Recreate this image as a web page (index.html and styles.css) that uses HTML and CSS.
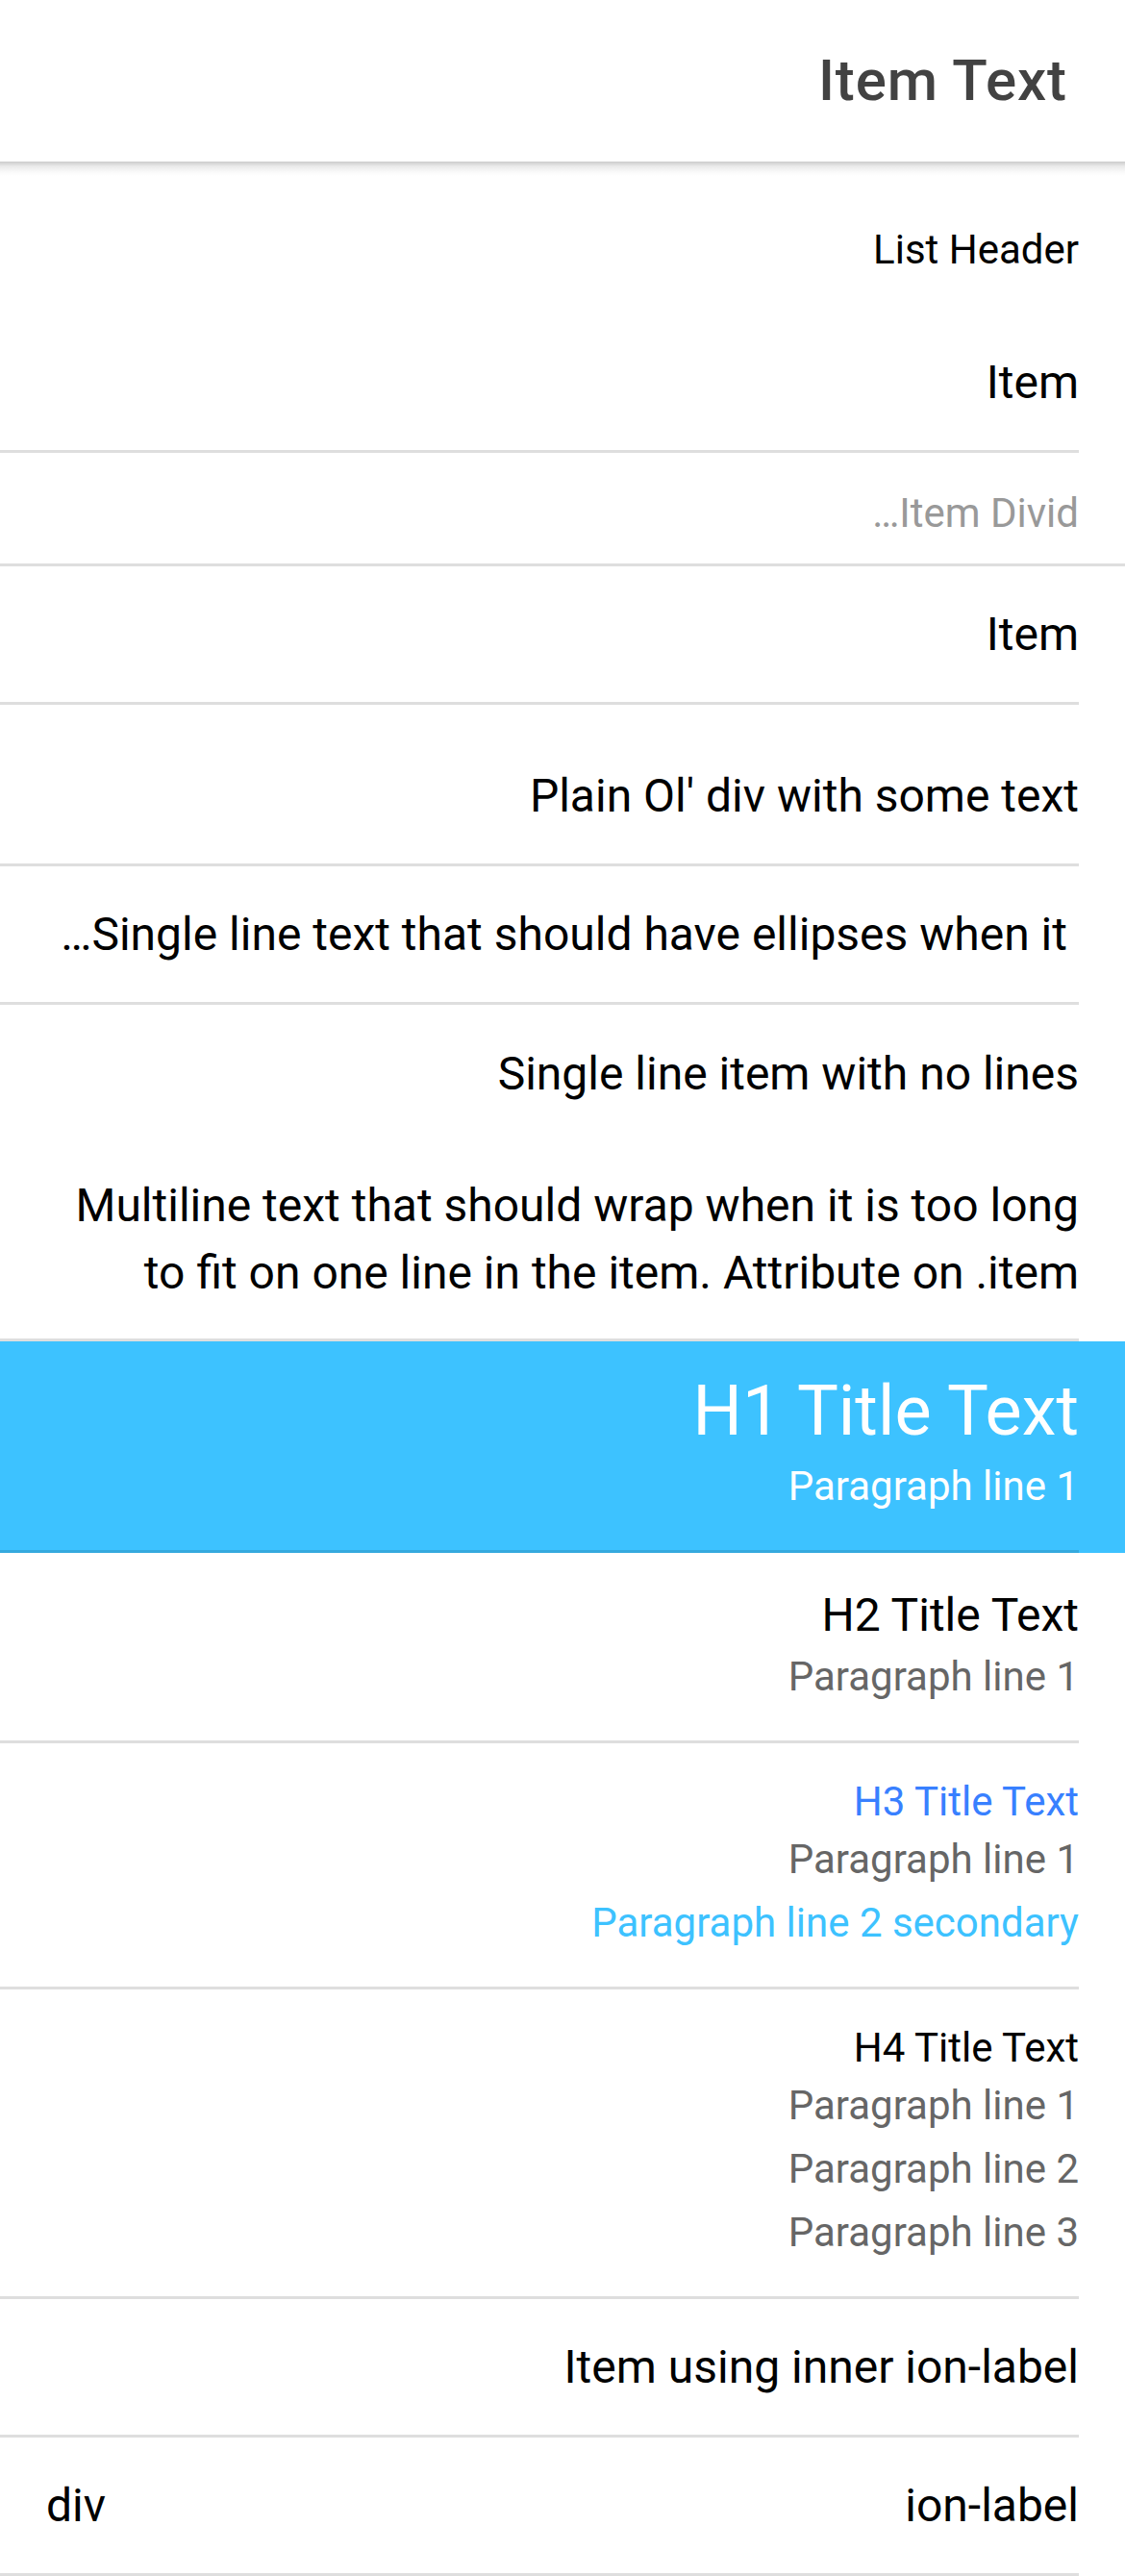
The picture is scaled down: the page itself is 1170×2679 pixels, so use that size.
FILE: index.html
```html
<!DOCTYPE html>
<html lang="en" dir="rtl">
<head>
<meta charset="utf-8">
<title>Item Text</title>
<link rel="stylesheet" href="styles.css">
</head>
<body>
<header class="toolbar">
  <div class="title">Item Text</div>
</header>
<main class="list">
  <div class="list-header">List Header</div>

  <div class="item"><div class="inner"><div class="label">Item</div></div></div>

  <div class="divider"><div class="divider-label"><span class="trunc" dir="ltr">…Item Divid</span></div></div>

  <div class="item"><div class="inner"><div class="label">Item</div></div></div>

  <div class="item item-plain"><div class="inner"><div class="plain">Plain Ol' div with some text</div></div></div>

  <div class="item"><div class="inner"><div class="label"><span class="trunc trunc-gap" dir="ltr">…Single line text that should have ellipses when it</span></div></div></div>

  <div class="item no-lines"><div class="inner"><div class="label">Single line item with no lines</div></div></div>

  <div class="item"><div class="inner"><div class="label wrap">Multiline text that should wrap when it is too long to fit on one line in the item. Attribute on .item</div></div></div>

  <div class="item item-secondary"><div class="inner"><div class="label stack">
    <h1>H1 Title Text</h1>
    <p>Paragraph line 1</p>
  </div></div></div>

  <div class="item"><div class="inner"><div class="label stack">
    <h2>H2 Title Text</h2>
    <p>Paragraph line 1</p>
  </div></div></div>

  <div class="item"><div class="inner"><div class="label stack">
    <h3 class="primary">H3 Title Text</h3>
    <p>Paragraph line 1</p>
    <p class="secondary">Paragraph line 2 secondary</p>
  </div></div></div>

  <div class="item"><div class="inner"><div class="label stack">
    <h4>H4 Title Text</h4>
    <p>Paragraph line 1</p>
    <p>Paragraph line 2</p>
    <p>Paragraph line 3</p>
  </div></div></div>

  <div class="item"><div class="inner"><div class="label">Item using inner ion-label</div></div></div>

  <div class="item"><div class="inner"><div class="label">ion-label</div><div class="end-div">div</div></div></div>
</main>
</body>
</html>
```

FILE: styles.css
```css
* {
  box-sizing: border-box;
}

html,
body {
  margin: 0;
  padding: 0;
  background: #fff;
}

body {
  font-family: Roboto, "Noto Sans", sans-serif;
  font-size: 48px;
  color: #000;
}

/* Toolbar */
.toolbar {
  position: relative;
  z-index: 2;
  display: flex;
  align-items: center;
  height: 168px;
  padding: 12px;
  background: #fff;
}

.toolbar::after {
  content: "";
  position: absolute;
  left: 0;
  right: 0;
  top: 100%;
  height: 15px;
  background: linear-gradient(to bottom, rgba(0, 0, 0, 0.2) 0%, rgba(0, 0, 0, 0.08) 35%, rgba(0, 0, 0, 0.02) 75%, rgba(0, 0, 0, 0) 100%);
}

.title {
  padding: 0 48px;
  font-size: 60px;
  font-weight: 500;
  line-height: 1;
  letter-spacing: 0.9px;
  color: #424242;
}

/* List */
.list {
  padding: 24px 0 24px;
}

.list-header {
  display: flex;
  align-items: center;
  min-height: 135px;
  padding-right: 48px;
  font-size: 42px;
  color: #000;
}

.item {
  padding-right: 48px;
  background: #fff;
}

.inner {
  display: flex;
  align-items: center;
  min-height: 144px;
  padding-left: 48px;
  border-bottom: 3px solid #dedede;
}

.no-lines .inner {
  border-bottom: none;
}

.label {
  flex: 1;
  min-width: 0;
  margin: 30px 0 30px 24px;
  line-height: 70px;
}

.trunc {
  display: inline-block;
  white-space: nowrap;
}

.trunc-gap {
  padding-right: 12px;
}

.wrap {
  margin-bottom: 33px;
}

/* Plain div item */
.item-plain .inner {
  min-height: 168px;
  padding-top: 24px;
}

.plain {
  flex: 1;
  line-height: 70px;
}

/* Divider */
.divider {
  display: flex;
  align-items: center;
  height: 118px;
  padding: 9px 48px 0 0;
  border-bottom: 3px solid #dedede;
  background: #fff;
}

.divider-label {
  font-size: 42px;
  color: #999;
  white-space: nowrap;
}

/* Stacked headings */
.stack h1,
.stack h2,
.stack h3,
.stack h4 {
  font-weight: 400;
  line-height: normal;
}

.stack h1 {
  margin: 0 0 6px;
  font-size: 72px;
}

.stack h2 {
  margin: 6px 0;
  font-size: 48px;
}

.stack h3,
.stack h4 {
  margin: 6px 0;
  font-size: 42px;
}

.stack p {
  margin: 0 0 6px;
  font-size: 42px;
  line-height: 60px;
  color: #666;
}

.primary {
  color: #3880ff;
}

.stack p.secondary {
  color: #3dc2ff;
}

.item-secondary {
  background: #3dc2ff;
  color: #fff;
}

.item-secondary .inner {
  border-bottom-color: #35a9de;
}

.item-secondary .stack p {
  color: #fff;
}

/* Last item */
.end-div {
  line-height: 70px;
}
```
